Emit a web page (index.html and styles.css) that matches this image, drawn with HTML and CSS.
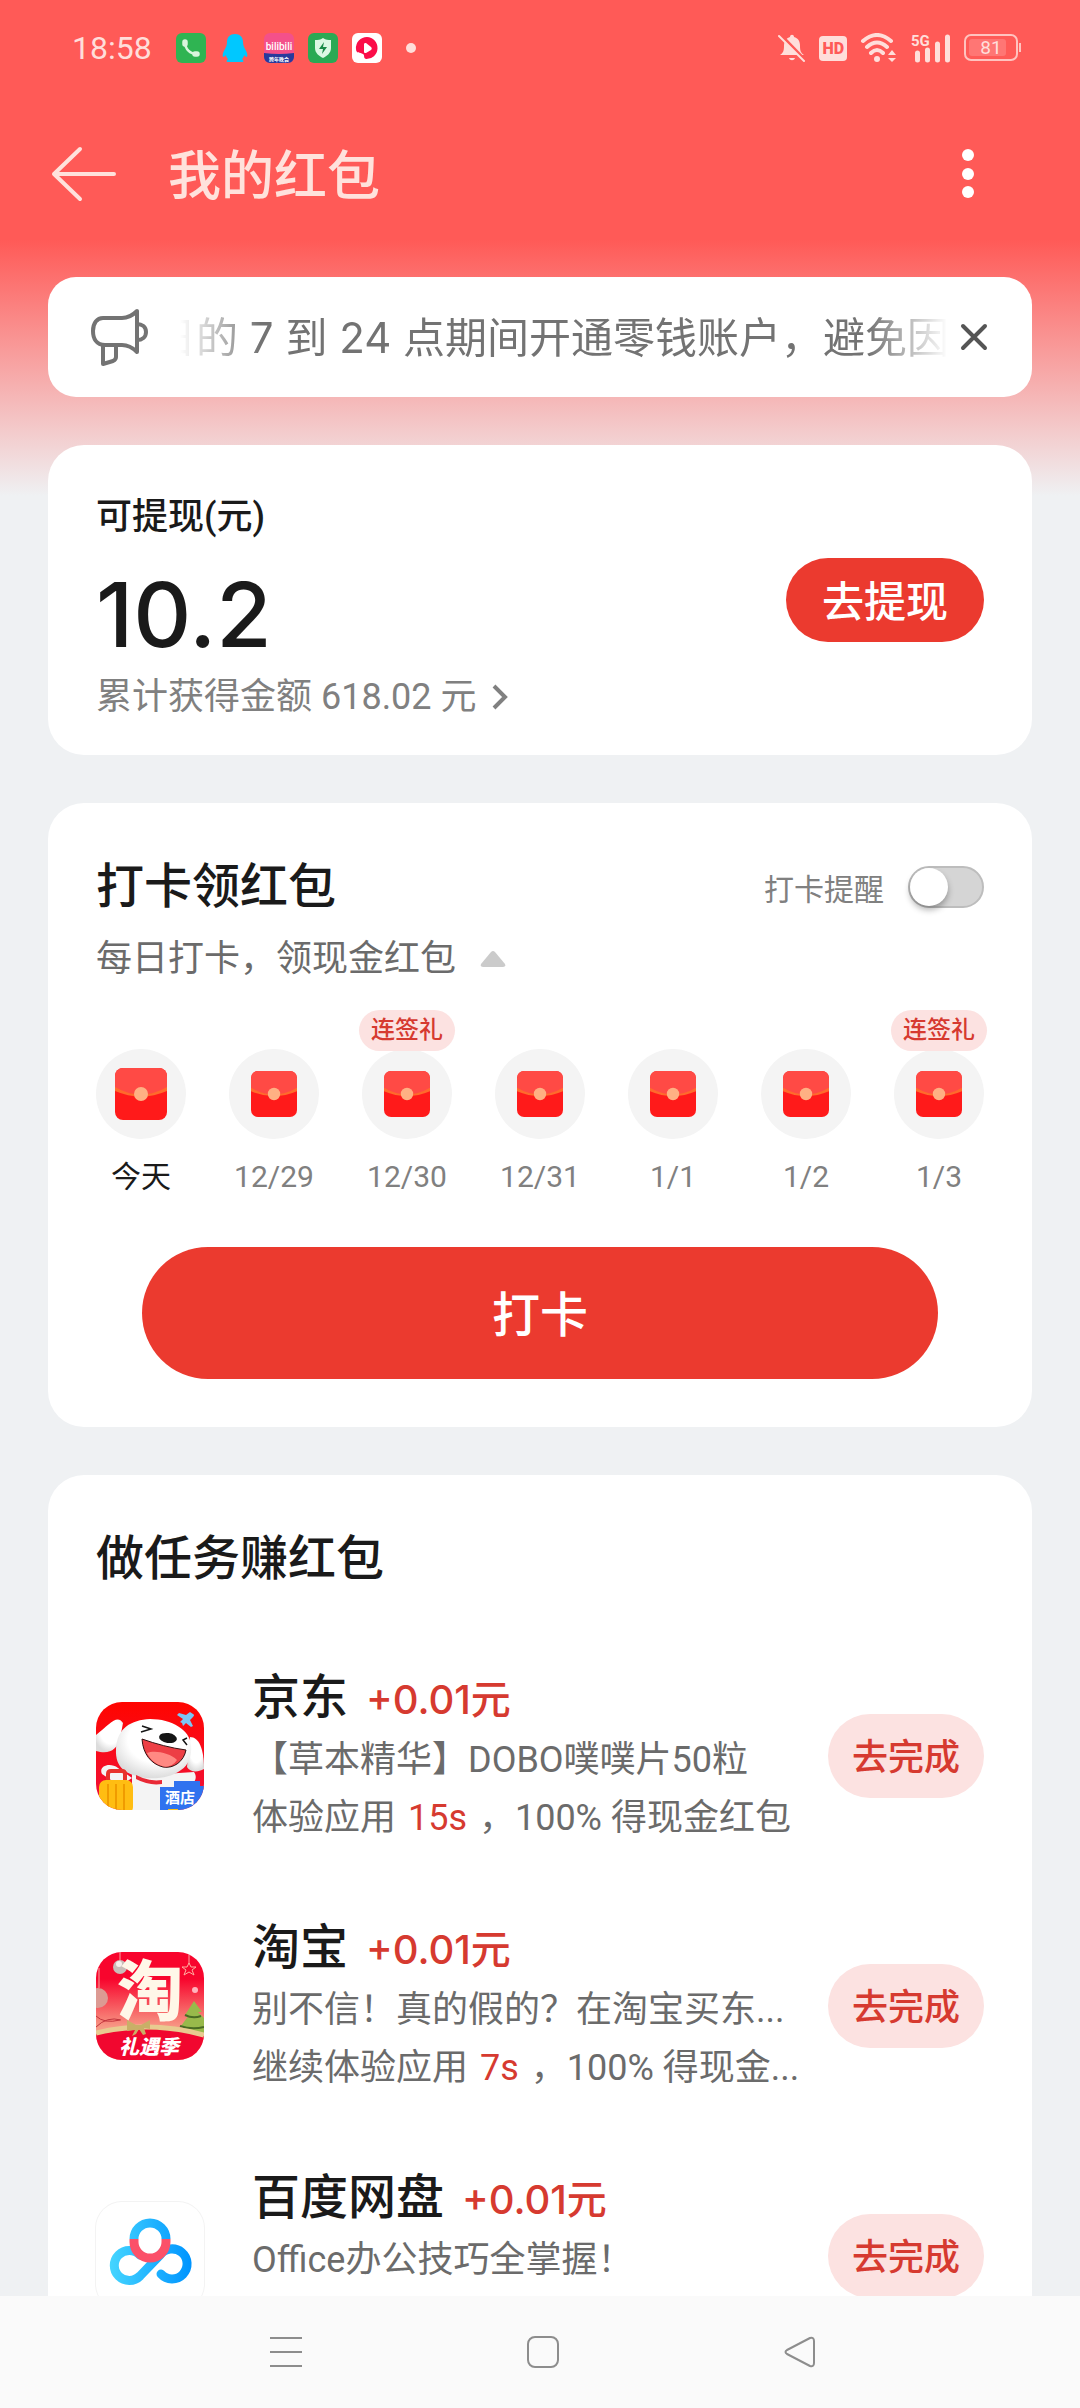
FILE: index.html
```html
<!DOCTYPE html>
<html lang="zh-CN">
<head>
  <meta charset="UTF-8">
  <meta name="viewport" content="width=device-width, initial-scale=1.0">
  <title>我的红包</title>
  <link rel="stylesheet" href="styles.css">
</head>
<body>
  <!-- shared red envelope -->
  <svg class="defs" width="0" height="0" aria-hidden="true">
    <symbol id="envelope" viewBox="0 0 52 52">
      <rect width="52" height="52" rx="8" fill="#ff1a1a"/>
      <path d="M0 20V8a8 8 0 0 1 8-8h36a8 8 0 0 1 8 8v12Q26 34 0 20Z" fill="#ff4a45"/>
      <path d="M0 19Q26 34 52 19v4Q26 34 0 23Z" fill="#ff6a2c"/>
      <circle cx="26" cy="26" r="7" fill="#ffb083"/>
    </symbol>
  </svg>

  <div class="status-bar">
    <div class="status-left">
      <span class="time">18:58</span>
      <svg width="30" height="30" viewBox="0 0 30 30">
        <rect width="30" height="30" rx="6" fill="#2fb452"/>
        <path d="M9 9C9 16 14 21 21 21" fill="none" stroke="#d9f5dd" stroke-width="2.5"/>
        <path d="M9 9v2M19 21h2" fill="none" stroke="#d9f5dd" stroke-width="5.5" stroke-linecap="round"/>
      </svg>
      <svg width="30" height="30" viewBox="0 0 30 30">
        <path d="M15 1C10 1 7 4 7 9c0 3-1 5-2 7-2 3-3 6-2 8 1 0 2-1 3-2 0 2 1 3 2 4-1 1-2 2-1 3h16c1-1 0-2-1-3 1-1 2-2 2-4 1 1 2 2 3 2 1-2 0-5-2-8-1-2-2-4-2-7 0-5-3-8-8-8Z" fill="#00c8ff"/>
      </svg>
      <svg width="30" height="30" viewBox="0 0 30 30">
        <rect width="30" height="30" rx="6" fill="#f4508a"/>
        <path d="M0 20Q15 22 30 20v4a6 6 0 0 1-6 6H6a6 6 0 0 1-6-6Z" fill="#283a9c"/>
        <text x="15" y="17" text-anchor="middle" font-size="10" font-weight="500" fill="#fff">bilibili</text>
        <text x="15" y="28" text-anchor="middle" font-size="5" font-weight="700" fill="#fff">跨年晚会</text>
      </svg>
      <svg width="30" height="30" viewBox="0 0 30 30">
        <rect width="30" height="30" rx="6" fill="#2aa954"/>
        <path d="M15 5c3 2 5 2 8 2v8c0 5-4 8-8 10-4-2-8-5-8-10V7c3 0 5 0 8-2Z" fill="#dcf8e4"/>
        <path d="M16 9l-5 7h4l-1 5 5-7h-4Z" fill="#1b8a48"/>
      </svg>
      <svg width="30" height="30" viewBox="0 0 30 30">
        <rect width="30" height="30" rx="6" fill="#fff"/>
        <path d="M15 4a11 11 0 1 1-1 22c-3-1-1-4-3-5-3-2-7 0-7-5A11 11 0 0 1 15 4Z" fill="#fb0d49"/>
        <path d="M12 11c0-1 1-1 2-1l5 4c1 1 1 2 0 3l-5 3c-1 0-2 0-2-1Z" fill="#fff"/>
      </svg>
      <span class="more-dot"></span>
    </div>
    <div class="status-right">
      <svg width="28" height="30" viewBox="0 0 28 30">
        <path d="M2 22c3-2 4-4 4-9 0-6 3-8 6-9 0-3 4-3 4 0 4 1 6 4 6 9s1 7 4 9Z" fill="#ffdeda"/>
        <path d="M11 25h6c-1 3-5 3-6 0Z" fill="#ffdeda"/>
        <path d="M2 1l26 27" stroke="#ff5a57" stroke-width="3"/>
        <path d="M1 3l25 25" stroke="#ffdeda" stroke-width="2" stroke-linecap="round"/>
      </svg>
      <span class="hd">HD</span>
      <svg width="38" height="30" viewBox="0 0 38 30">
        <g fill="none" stroke="#ffdeda" stroke-width="4" stroke-linecap="round">
          <path d="M3 8Q17-4 31 8M7 14Q17 5 27 14M11 20Q17 14 23 20"/>
        </g>
        <circle cx="17" cy="26" r="3" fill="#ffdeda"/>
        <path d="M32 17l4 5h-8ZM32 29l4-4h-8Z" fill="#ffdeda"/>
      </svg>
      <svg width="40" height="30" viewBox="0 0 40 30">
        <text x="0" y="13" font-size="15" font-weight="700" fill="#ffdeda">5G</text>
        <path d="M6.500 20v7M16.500 17v10M26.500 11v16M36.500 4v23" stroke="#ffdeda" stroke-width="5" stroke-linecap="round"/>
      </svg>
      <svg width="58" height="30" viewBox="0 0 58 30">
        <rect x="1" y="2" width="52" height="25" rx="6" fill="none" stroke="#ffc3bf" stroke-width="2"/>
        <rect x="5" y="6" width="37" height="17" rx="3" fill="#ff7674"/>
        <path d="M56 10v9" stroke="#ffc3bf" stroke-width="2"/>
        <text x="27" y="21" text-anchor="middle" font-size="19" fill="#ffdeda">81</text>
      </svg>
    </div>
  </div>

  <header class="title-bar">
    <button class="icon-button back" aria-label="返回">
      <svg width="68" height="56" viewBox="0 0 68 56" fill="none" stroke="#ffe2dc" stroke-width="4" stroke-linecap="round" stroke-linejoin="round">
        <path d="M30 3L4 28l26 25M4 28h60"/>
      </svg>
    </button>
    <h1>我的红包</h1>
    <button class="icon-button" aria-label="更多">
      <svg width="32" height="56" viewBox="0 0 32 56" fill="#fff">
        <circle cx="16" cy="9" r="6"/>
        <circle cx="16" cy="28" r="6"/>
        <circle cx="16" cy="46" r="6"/>
      </svg>
    </button>
  </header>

  <main>
    <div class="notice">
      <svg width="60" height="60" viewBox="0 0 60 60" fill="none" stroke="#737373" stroke-width="4" stroke-linejoin="round">
        <path d="M13 11h19c6 0 11-3 15-7v41c-4-4-9-7-15-7H15C6 38 3 31 3 24c0-8 4-13 10-13Z"/>
        <path d="M47 17c5 0 9 3 9 8s-4 8-9 8M13 38v19l10-3c2-1 3-2 3-4V38"/>
      </svg>
      <div class="marquee">
        <p>日的 7 到 24 点期间开通零钱账户，避免因</p>
      </div>
      <button class="icon-button" aria-label="关闭">
        <svg width="28" height="28" viewBox="0 0 28 28" stroke="#555" stroke-width="4" stroke-linecap="round">
          <path d="M3 3l22 22M25 3L3 25"/>
        </svg>
      </button>
    </div>

    <section class="card balance">
      <div class="balance-info">
        <p class="balance-label">可提现(元)</p>
        <p class="balance-amount">10.2</p>
        <a class="balance-total" href="#history">累计获得金额 618.02 元
          <svg width="18" height="26" viewBox="0 0 18 26" fill="none" stroke="#808080" stroke-width="4">
            <path d="M3 2l11 11L3 24"/>
          </svg>
        </a>
      </div>
      <button class="withdraw">去提现</button>
    </section>

    <section class="card checkin">
      <div class="checkin-head">
        <h2>打卡领红包</h2>
        <label class="reminder" for="reminder">打卡提醒
          <input class="switch" type="checkbox" id="reminder">
        </label>
      </div>
      <p class="checkin-sub">每日打卡，领现金红包
        <svg width="26" height="16" viewBox="0 0 26 16">
          <path d="M11 1q2-2 4 0l10 12q1 3-2 3H3q-3 0-2-3Z" fill="#cbcbcb"/>
        </svg>
      </p>
      <ul class="days">
        <li class="day today"><span class="circle"><svg><use href="#envelope"/></svg></span>今天</li>
        <li class="day"><span class="circle"><svg><use href="#envelope"/></svg></span>12/29</li>
        <li class="day"><span class="badge">连签礼</span><span class="circle"><svg><use href="#envelope"/></svg></span>12/30</li>
        <li class="day"><span class="circle"><svg><use href="#envelope"/></svg></span>12/31</li>
        <li class="day"><span class="circle"><svg><use href="#envelope"/></svg></span>1/1</li>
        <li class="day"><span class="circle"><svg><use href="#envelope"/></svg></span>1/2</li>
        <li class="day"><span class="badge">连签礼</span><span class="circle"><svg><use href="#envelope"/></svg></span>1/3</li>
      </ul>
      <button class="checkin-button">打卡</button>
    </section>

    <section class="card tasks">
      <h2>做任务赚红包</h2>

      <div class="task">
        <svg class="app-icon" viewBox="0 0 108 108">
          <defs>
            <radialGradient id="fur" cx="0.55" cy="0.35" r="0.65">
              <stop offset="0.6" stop-color="#fff"/>
              <stop offset="1" stop-color="#dcdcdc"/>
            </radialGradient>
            <linearGradient id="jd-bg" x1="0" y1="0" x2="0" y2="1">
              <stop offset="0" stop-color="#ff0500"/>
              <stop offset="1" stop-color="#f0123c"/>
            </linearGradient>
          </defs>
          <rect width="108" height="108" fill="url(#jd-bg)"/>
          <path d="M36 72h32l30-2c3 4 2 9-2 12l-20 8v18H36Z" fill="#f4f4f4"/>
          <path d="M6 72c-4-8 8-12 16-6l14 10-12 8Z" fill="#f4f4f4"/>
          <path d="M27 21C21 12 14 22 0 33v16c14 4 21-2 24-12Z" fill="url(#fur)"/>
          <path d="M94 35c9 0 14 12 14 32-7 4-14 3-17-2l2-20Z" fill="url(#fur)"/>
          <path d="M20 47c1-21 15-29 34-30 22 0 40 11 41 26 1 10-2 20-10 25-9 7-22 9-35 8-20-3-31-10-30-29Z" fill="url(#fur)"/>
          <path d="M46 37c14 5 29 9 44 11-2 11-12 19-23 17-12-3-20-13-21-28Z" fill="#ed3f45" stroke="#311" stroke-width="1"/>
          <path d="M51 51c8-3 23 0 30 7-4 6-10 8-15 6-7-2-12-7-15-13Z" fill="#ff8983"/>
          <ellipse cx="72" cy="36" rx="9" ry="5" fill="#151515" transform="rotate(8 72 36)"/>
          <path d="M46 24l9 3-10 3M91 36l-4 2 4 5" fill="none" stroke="#151515" stroke-width="1.500"/>
          <path d="M40 73q13 7 26 5v4q-13 2-26-5Z" fill="#e92936"/>
          <path d="M12 78v-6q0-3 3-3h11q3 0 3 3v6" fill="none" stroke="#e8322c" stroke-width="4"/>
          <rect x="3" y="78" width="34" height="34" rx="7" fill="#ffbd12"/>
          <path d="M12 82v26M20 82v26M28 82v26" stroke="#f09b00" stroke-width="2"/>
          <path d="M64 85h14v-6h26v5h4v24H64Z" fill="#2f72ef"/>
          <path d="M72 107h10v1H72Z" fill="#ffc31b"/>
          <text x="84" y="101" text-anchor="middle" font-size="15" font-weight="700" fill="#fff">酒店</text>
          <path d="M97 12q2 1 0 3l-3 3 3 6-2 1-5-4-3 3-1-3-2-1 3-3-6-4 2-2 7 2 4-3Z" fill="#7bc6f5"/>
        </svg>
        <div class="task-info">
          <h3>京东 <span class="reward">+0.01元</span></h3>
          <p>【草本精华】DOBO噗噗片50粒</p>
          <p>体验应用 <em>15s</em> ，100% 得现金红包</p>
        </div>
        <button class="go">去完成</button>
      </div>

      <div class="task">
        <svg class="app-icon" viewBox="0 0 108 108">
          <defs>
            <linearGradient id="tb-bg" x1="0" y1="0" x2="0" y2="1">
              <stop offset="0.250" stop-color="#f8052d"/>
              <stop offset="0.700" stop-color="#f79a86"/>
            </linearGradient>
          </defs>
          <rect width="108" height="108" fill="url(#tb-bg)"/>
          <path d="M24 0v9M3 16v20M93 0v12" stroke="#f7a6a0" stroke-width="1"/>
          <circle cx="24" cy="15" r="7" fill="#c9bcb8"/>
          <circle cx="23" cy="12" r="3" fill="#f6efec"/>
          <circle cx="2" cy="46" r="10" fill="#dc9a93"/>
          <path d="M93 11l2 4h5l-4 3 2 5-5-3-5 3 2-5-4-3h5Z" fill="none" stroke="#ffb0a0" stroke-width="1"/>
          <circle cx="99" cy="38" r="3" fill="#ffb4bd"/>
          <path d="M98 49l-9 14h4l-8 11h4l-6 8h25V66l-6-6h4Z" fill="#98b94b"/>
          <path d="M89 63q8 4 16 1M84 74q12 4 24 1" fill="none" stroke="#496b24" stroke-width="2"/>
          <path d="M0 64q8 8 24 4M0 75q11-11 25-7" fill="none" stroke="#c2343d" stroke-width="1"/>
          <text x="54" y="63" text-anchor="middle" font-size="66" font-weight="900" fill="#fff7e8">淘</text>
          <path d="M0 82Q54 69 108 84v24H0Z" fill="#f1072f"/>
          <path d="M0 81Q54 68 108 83" fill="none" stroke="#e8cb90" stroke-width="5"/>
          <path d="M40 73l-9-5v11l8-1-3 6 4-2 3-5 4 6 3-1-2-6 6 1V68l-9 5Z" fill="#c9af67"/>
          <text x="53" y="102" text-anchor="middle" font-size="20" font-weight="900" font-style="italic" fill="#fff">礼遇季</text>
        </svg>
        <div class="task-info">
          <h3>淘宝 <span class="reward">+0.01元</span></h3>
          <p>别不信！真的假的？在淘宝买东...</p>
          <p>继续体验应用 <em>7s</em> ，100% 得现金...</p>
        </div>
        <button class="go">去完成</button>
      </div>

      <div class="task">
        <svg class="app-icon outlined" viewBox="0 0 108 108" fill="none" stroke-width="9" stroke-linecap="round">
          <defs>
            <linearGradient id="pan-blue" gradientUnits="userSpaceOnUse" x1="14" y1="0" x2="94" y2="0">
              <stop offset="0" stop-color="#45d5ff"/>
              <stop offset="1" stop-color="#0095ff"/>
            </linearGradient>
          </defs>
          <path d="M44 74A15 15 0 1 1 44 53M44 74L64 53A15 15 0 1 1 65 72" stroke="url(#pan-blue)"/>
          <path d="M38 37A16 16 0 0 1 70 37" stroke="url(#pan-blue)" stroke-linecap="butt"/>
          <path d="M38 37v3A16 16 0 0 0 70 40v-3" stroke="#fb5069" stroke-linecap="butt"/>
        </svg>
        <div class="task-info">
          <h3>百度网盘 <span class="reward">+0.01元</span></h3>
          <p>Office办公技巧全掌握！</p>
        </div>
        <button class="go">去完成</button>
      </div>
    </section>
  </main>

  <nav class="system-nav">
    <button class="icon-button" aria-label="最近任务">
      <svg width="32" height="32" viewBox="0 0 32 32" stroke="#8d8d8d" stroke-width="2">
        <path d="M0 2h32M0 16h32M0 30h32"/>
      </svg>
    </button>
    <button class="icon-button" aria-label="主页">
      <svg width="32" height="32" viewBox="0 0 32 32" fill="none" stroke="#8d8d8d" stroke-width="2">
        <rect x="1" y="1" width="30" height="30" rx="7"/>
      </svg>
    </button>
    <button class="icon-button" aria-label="返回上一页">
      <svg width="32" height="32" viewBox="0 0 32 32" fill="none" stroke="#8d8d8d" stroke-width="2" stroke-linejoin="round">
        <path d="M3 14L26 2q4-1 4 3v22q0 4-4 3L3 18q-3-2 0-4Z"/>
      </svg>
    </button>
  </nav>
</body>
</html>
```
FILE: styles.css
```css
* {
  margin: 0;
  padding: 0;
  box-sizing: border-box;
}

body {
  display: flex;
  flex-direction: column;
  height: 100vh;
  overflow: hidden;
  font-family: Roboto, "Noto Sans CJK SC", sans-serif;
  color: #1a1a1a;
  background: linear-gradient(#ff5a57 240px, #eff1f3 496px);
}

button {
  border: none;
  font-family: inherit;
  cursor: pointer;
}

svg {
  display: block;
  flex-shrink: 0;
}

.defs {
  position: absolute;
}

.icon-button {
  display: flex;
  background: none;
}

/* status bar */
.status-bar {
  display: flex;
  justify-content: space-between;
  align-items: center;
  flex-shrink: 0;
  height: 96px;
  padding: 0 58px 0 72px;
}

.status-left,
.status-right {
  display: flex;
  align-items: center;
  gap: 14px;
}

.status-right {
  gap: 13px;
}

.time {
  margin-right: 10px;
  font-size: 32px;
  color: #ffdeda;
}

.more-dot {
  width: 10px;
  height: 10px;
  margin-left: 10px;
  border-radius: 50%;
  background: #ffdeda;
}

.hd {
  padding: 0 3px;
  border-radius: 4px;
  font-size: 16px;
  font-weight: 900;
  line-height: 25px;
  color: #ff5a57;
  background: #ffdeda;
}

/* title bar */
.title-bar {
  display: flex;
  align-items: center;
  flex-shrink: 0;
  height: 156px;
  padding: 0 96px 0 50px;
}

.title-bar h1 {
  flex: 1;
  margin-left: 50px;
  padding-bottom: 4px;
  font-size: 53px;
  font-weight: 500;
  color: #ffe2dc;
}

/* content */
main {
  display: flex;
  flex-direction: column;
  flex: 1;
  gap: 48px;
  min-height: 0;
  padding: 25px 48px 0;
  overflow: hidden;
}

.notice {
  display: flex;
  align-items: center;
  flex-shrink: 0;
  height: 120px;
  padding: 0 44px 0 42px;
  border-radius: 28px;
  background: #fff;
}

.marquee {
  flex: 1;
  margin: 0 12px 0 30px;
  padding-bottom: 6px;
  overflow: hidden;
  white-space: nowrap;
  font-family: Inter, "Noto Sans CJK SC", sans-serif;
  font-size: 42px;
  color: #737373;
  mask-image: linear-gradient(90deg, transparent, #000 80px, #000 calc(100% - 80px), transparent);
}

.marquee p {
  text-indent: -26px;
}

.card {
  flex-shrink: 0;
  padding: 52px 48px 48px;
  border-radius: 36px;
  background: #fff;
}

.card h2 {
  font-size: 48px;
  font-weight: 500;
  line-height: 64px;
}

/* balance */
.balance {
  display: flex;
  justify-content: space-between;
  align-items: center;
  padding: 0 48px;
}

.balance-info {
  padding: 48px 0 34px;
}

.balance-label {
  font-size: 36px;
  font-weight: 500;
  line-height: 48px;
}

.balance-amount {
  margin: 24px 0 8px;
  font-family: Inter, sans-serif;
  font-size: 90px;
  font-weight: 500;
  line-height: 100px;
}

.balance-total {
  display: flex;
  align-items: center;
  gap: 14px;
  font-size: 36px;
  line-height: 48px;
  color: #808080;
  text-decoration: none;
}

.withdraw {
  height: 84px;
  padding: 0 36px 4px;
  border-radius: 42px;
  font-size: 42px;
  font-weight: 500;
  color: #fff;
  background: #eb3a2f;
}

/* check in */
.checkin-head {
  display: flex;
  justify-content: space-between;
  align-items: center;
}

.reminder {
  display: flex;
  align-items: center;
  gap: 24px;
  font-size: 30px;
  color: #808080;
}

.switch {
  appearance: none;
  width: 76px;
  height: 42px;
  border: 2px solid #bdbdbd;
  border-radius: 21px;
  background: #d5d5d5;
}

.switch::before {
  content: '';
  display: block;
  width: 38px;
  height: 38px;
  border-radius: 50%;
  background: #fff;
  box-shadow: 0 4px 6px rgba(0, 0, 0, 0.3);
}

.switch:checked {
  background: #eb3a2f;
}

.switch:checked::before {
  margin-left: auto;
}

.checkin-sub {
  display: flex;
  align-items: center;
  gap: 24px;
  margin-top: 16px;
  font-size: 36px;
  line-height: 48px;
  color: #6b6b6b;
}

.days {
  display: flex;
  justify-content: space-between;
  margin-top: 66px;
  list-style: none;
}

.day {
  position: relative;
  display: flex;
  flex-direction: column;
  align-items: center;
  gap: 18px;
  width: 90px;
  font-size: 30px;
  line-height: 40px;
  color: #808080;
}

.circle {
  display: flex;
  justify-content: center;
  align-items: center;
  width: 90px;
  height: 90px;
  border-radius: 50%;
  background: #f4f4f4;
}

.circle svg {
  width: 46px;
  height: 46px;
}

.today {
  color: #1a1a1a;
}

.today .circle svg {
  width: 52px;
  height: 52px;
}

.badge {
  position: absolute;
  top: -39px;
  padding: 0 12px;
  border-radius: 21px;
  font-size: 24px;
  font-weight: 500;
  line-height: 41px;
  white-space: nowrap;
  color: #d63a30;
  background: #fce2e1;
}

.checkin-button {
  display: block;
  width: calc(100% - 92px);
  height: 132px;
  margin: 50px auto 0;
  padding-bottom: 4px;
  border-radius: 66px;
  font-size: 48px;
  font-weight: 500;
  color: #fff;
  background: #eb3a2f;
}

/* tasks */
.task {
  display: flex;
  align-items: center;
  margin-top: 68px;
}

.tasks h2 + .task {
  margin-top: 74px;
}

.app-icon {
  width: 108px;
  height: 108px;
  border-radius: 26px;
}

.outlined {
  box-shadow: 0 0 0 1px #f3f3f3;
}

.task-info {
  flex: 1;
  min-width: 0;
  min-height: 182px;
  margin: 0 24px 0 48px;
  white-space: nowrap;
}

.task h3 {
  font-size: 48px;
  font-weight: 500;
  line-height: 66px;
}

.reward {
  margin-left: 6px;
  font-family: Inter, "Noto Sans CJK SC", sans-serif;
  font-size: 40px;
  line-height: 40px;
  color: #d63a30;
}

.task p {
  font-size: 36px;
  line-height: 58px;
  color: #6b6b6b;
}

.task em {
  margin: 0 3px;
  font-style: normal;
  color: #d63a30;
}

.go {
  height: 84px;
  padding: 0 24px 4px;
  border-radius: 42px;
  font-size: 36px;
  font-weight: 500;
  color: #d63a30;
  background: #fce2e1;
}

/* system navigation */
.system-nav {
  display: flex;
  justify-content: space-between;
  align-items: center;
  flex-shrink: 0;
  height: 112px;
  padding: 0 264px 0 270px;
  background: #fafafa;
}
```
